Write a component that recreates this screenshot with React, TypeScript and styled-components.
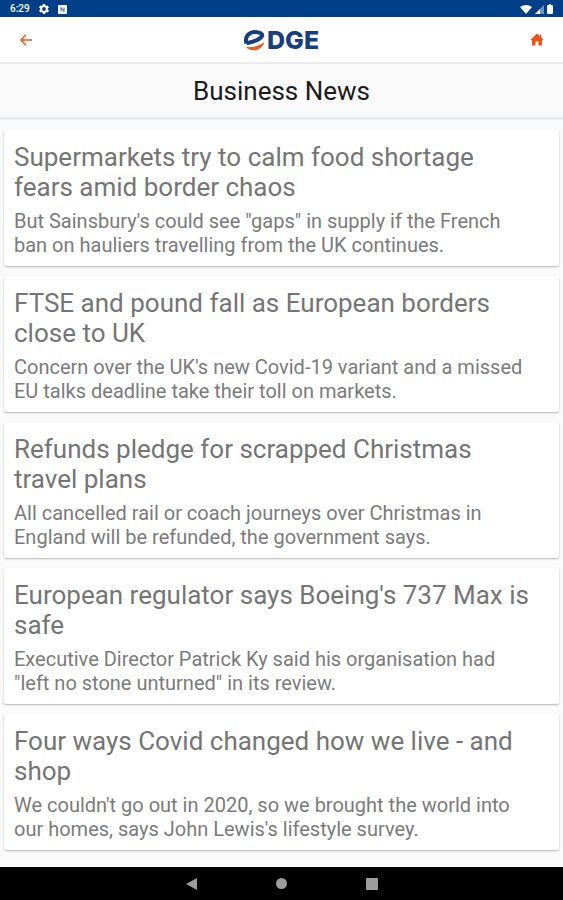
import React from "react";
import styled, { createGlobalStyle } from "styled-components";

const GlobalStyle = createGlobalStyle`
  *, *::before, *::after { box-sizing: border-box; }
  body {
    margin: 0;
    background: #fafafa;
    font-family: Roboto, "Liberation Sans", sans-serif;
  }
`;

const Screen = styled.div`
  display: flex;
  flex-direction: column;
  min-height: 100vh;
`;

const StatusBar = styled.div`
  display: flex;
  justify-content: space-between;
  align-items: center;
  height: 17px;
  padding: 1px 10px 0;
  background: #003f87;
  color: #ffffff;
`;

const StatusGroup = styled.div<{ $gap: number }>`
  display: flex;
  align-items: center;
  gap: ${({ $gap }) => $gap}px;
`;

const Clock = styled.time`
  font-size: 10px;
  line-height: 12px;
  font-weight: 500;
`;

const AppBar = styled.header`
  display: grid;
  grid-template-columns: 52px 1fr 52px;
  align-items: center;
  height: 47px;
  background: #ffffff;
  border-bottom: 2px solid #e9eaeb;
`;

const IconButton = styled.button`
  display: flex;
  justify-content: center;
  align-items: center;
  height: 44px;
  padding: 0;
  border: 0;
  background: transparent;
  color: #ea5415;
  cursor: pointer;
`;

const Brand = styled.div`
  display: flex;
  justify-content: center;
`;

const PageTitle = styled.h1`
  margin: 0;
  padding: 11px 16px 10px;
  border-bottom: 3px solid #e9ecee;
  color: #1c1c1c;
  font-size: 26px;
  line-height: 32px;
  font-weight: 400;
  text-align: center;
`;

const NewsList = styled.main`
  display: flex;
  flex: 1;
  flex-direction: column;
  gap: 10px;
  padding: 10px 4px 14px;
`;

const NewsCard = styled.article`
  padding: 12px 28px 9px 10px;
  border-radius: 2px;
  background: #ffffff;
  box-shadow: 0 1px 2px rgba(0, 0, 0, 0.28);
`;

const Headline = styled.h2`
  margin: 0 0 7px;
  color: #757575;
  font-size: 26px;
  line-height: 30px;
  font-weight: 400;
`;

const Summary = styled.p`
  margin: 0;
  color: #7b7b7b;
  font-size: 20px;
  line-height: 24px;
`;

const NavBar = styled.nav`
  display: flex;
  justify-content: center;
  align-items: center;
  gap: 50px;
  height: 33px;
  background: #000000;
`;

const NavButton = styled.button`
  display: flex;
  justify-content: center;
  align-items: center;
  width: 40px;
  height: 33px;
  padding: 0;
  border: 0;
  background: transparent;
  color: #9c9c9c;
`;

const news = [
  {
    title: "Supermarkets try to calm food shortage fears amid border chaos",
    summary:
      'But Sainsbury\'s could see "gaps" in supply if the French ban on hauliers travelling from the UK continues.',
  },
  {
    title: "FTSE and pound fall as European borders close to UK",
    summary:
      "Concern over the UK's new Covid-19 variant and a missed EU talks deadline take their toll on markets.",
  },
  {
    title: "Refunds pledge for scrapped Christmas travel plans",
    summary:
      "All cancelled rail or coach journeys over Christmas in England will be refunded, the government says.",
  },
  {
    title: "European regulator says Boeing's 737 Max is safe",
    summary:
      'Executive Director Patrick Ky said his organisation had "left no stone unturned" in its review.',
  },
  {
    title: "Four ways Covid changed how we live - and shop",
    summary:
      "We couldn't go out in 2020, so we brought the world into our homes, says John Lewis's lifestyle survey.",
  },
];

const GearIcon = () => (
  <svg width="12" height="12" viewBox="0 0 24 24" fill="currentColor" aria-hidden="true">
    <path d="M19.4 13a7.500 7.500 0 0 0 0-2l2.100-1.600a.5.5 0 0 0 .1-.7l-2-3.400a.5.5 0 0 0-.6-.2l-2.500 1a7.300 7.300 0 0 0-1.700-1l-.4-2.600a.5.5 0 0 0-.5-.5h-4a.5.5 0 0 0-.5.5l-.4 2.600a7.300 7.300 0 0 0-1.700 1l-2.500-1a.5.5 0 0 0-.6.2l-2 3.400a.5.5 0 0 0 .1.700L4.600 11a7.500 7.500 0 0 0 0 2l-2.100 1.600a.5.5 0 0 0-.1.700l2 3.400c.1.200.4.300.6.200l2.500-1c.5.400 1.100.7 1.700 1l.4 2.600c0 .3.200.5.5.5h4c.3 0 .5-.2.5-.5l.4-2.600c.6-.3 1.200-.6 1.700-1l2.500 1c.2.100.5 0 .6-.2l2-3.400a.5.5 0 0 0-.1-.7zM12 15.800a3.800 3.800 0 1 1 0-7.600 3.800 3.800 0 0 1 0 7.600z" />
  </svg>
);

const NoticeIcon = () => (
  <svg width="9" height="9" viewBox="0 0 9 9" aria-hidden="true">
    <rect width="9" height="9" rx="1" fill="#ffffff" />
    <path d="M3 6.500V2.500l3 4V2.500" fill="none" stroke="#003f87" strokeWidth="0.8" />
  </svg>
);

const WifiIcon = () => (
  <svg width="12" height="9" viewBox="0 0 12 9" aria-hidden="true">
    <path d="M0 2Q6-2 12 2L6 9z" fill="currentColor" />
  </svg>
);

const SignalIcon = () => (
  <svg width="9" height="9" viewBox="0 0 9 9" aria-hidden="true">
    <path d="M9 0V9H0z" fill="#ffffff" opacity="0.45" />
    <path d="M5 4V9H0z" fill="#ffffff" />
  </svg>
);

const BatteryIcon = () => (
  <svg width="6" height="10" viewBox="0 0 6 10" aria-hidden="true">
    <path d="M2 0h2v1h1q1 0 1 1v7q0 1-1 1H1Q0 10 0 9V2Q0 1 1 1h1z" fill="currentColor" />
  </svg>
);

const BackArrow = () => (
  <svg width="12" height="12" viewBox="0 0 12 12" aria-hidden="true">
    <path d="M12 6H1M6 .8L.9 6 6 11.200" fill="none" stroke="currentColor" strokeWidth="1.300" />
  </svg>
);

const HomeIcon = () => (
  <svg width="12" height="13" viewBox="0 0 12 13" aria-hidden="true">
    <path
      d="M6 .5L8.700 3V1.500h1.500v2.900L12 6.200v1h-1V12.500H7.500V8.500h-3v4H1V7.200H0v-1z"
      fill="currentColor"
    />
  </svg>
);

const Logo = () => (
  <svg width="78" height="40" viewBox="0 0 78 40" role="img" aria-label="eDGE">
    <path
      d="M3.400 23.500C1.500 16.500 6 12 12 12c5 0 8 2 7 4.200-1.200 2.400-7.500 5.400-15.500 7"
      fill="none"
      stroke="#173f80"
      strokeWidth="4"
    />
    <path
      d="M3 26.500c5 1.400 12 .2 18.500-4.500-1.500 5-5.500 8.300-10.500 8.300-4 0-6.700-1.300-8-3.800z"
      fill="#ee5a24"
    />
    <text
      x="24"
      y="29"
      fill="#173f80"
      fontFamily="Inter, sans-serif"
      fontSize="25"
      fontWeight="800"
    >
      DGE
    </text>
  </svg>
);

export default function App() {
  return (
    <>
      <GlobalStyle />
      <Screen>
        <StatusBar>
          <StatusGroup $gap={8}>
            <Clock>6:29</Clock>
            <GearIcon />
            <NoticeIcon />
          </StatusGroup>
          <StatusGroup $gap={3}>
            <WifiIcon />
            <SignalIcon />
            <BatteryIcon />
          </StatusGroup>
        </StatusBar>
        <AppBar>
          <IconButton type="button" aria-label="Back">
            <BackArrow />
          </IconButton>
          <Brand>
            <Logo />
          </Brand>
          <IconButton type="button" aria-label="Home">
            <HomeIcon />
          </IconButton>
        </AppBar>
        <PageTitle>Business News</PageTitle>
        <NewsList>
          {news.map((item) => (
            <NewsCard key={item.title}>
              <Headline>{item.title}</Headline>
              <Summary>{item.summary}</Summary>
            </NewsCard>
          ))}
        </NewsList>
        <NavBar aria-label="System navigation">
          <NavButton type="button" aria-label="Back">
            <svg width="11" height="12" viewBox="0 0 11 12" aria-hidden="true">
              <path d="M11 0v12L0 6z" fill="currentColor" />
            </svg>
          </NavButton>
          <NavButton type="button" aria-label="Home">
            <svg width="11" height="11" viewBox="0 0 11 11" aria-hidden="true">
              <circle cx="5.500" cy="5.500" r="5.500" fill="currentColor" />
            </svg>
          </NavButton>
          <NavButton type="button" aria-label="Recent apps">
            <svg width="12" height="12" viewBox="0 0 12 12" aria-hidden="true">
              <rect width="12" height="12" rx="1" fill="currentColor" />
            </svg>
          </NavButton>
        </NavBar>
      </Screen>
    </>
  );
}
